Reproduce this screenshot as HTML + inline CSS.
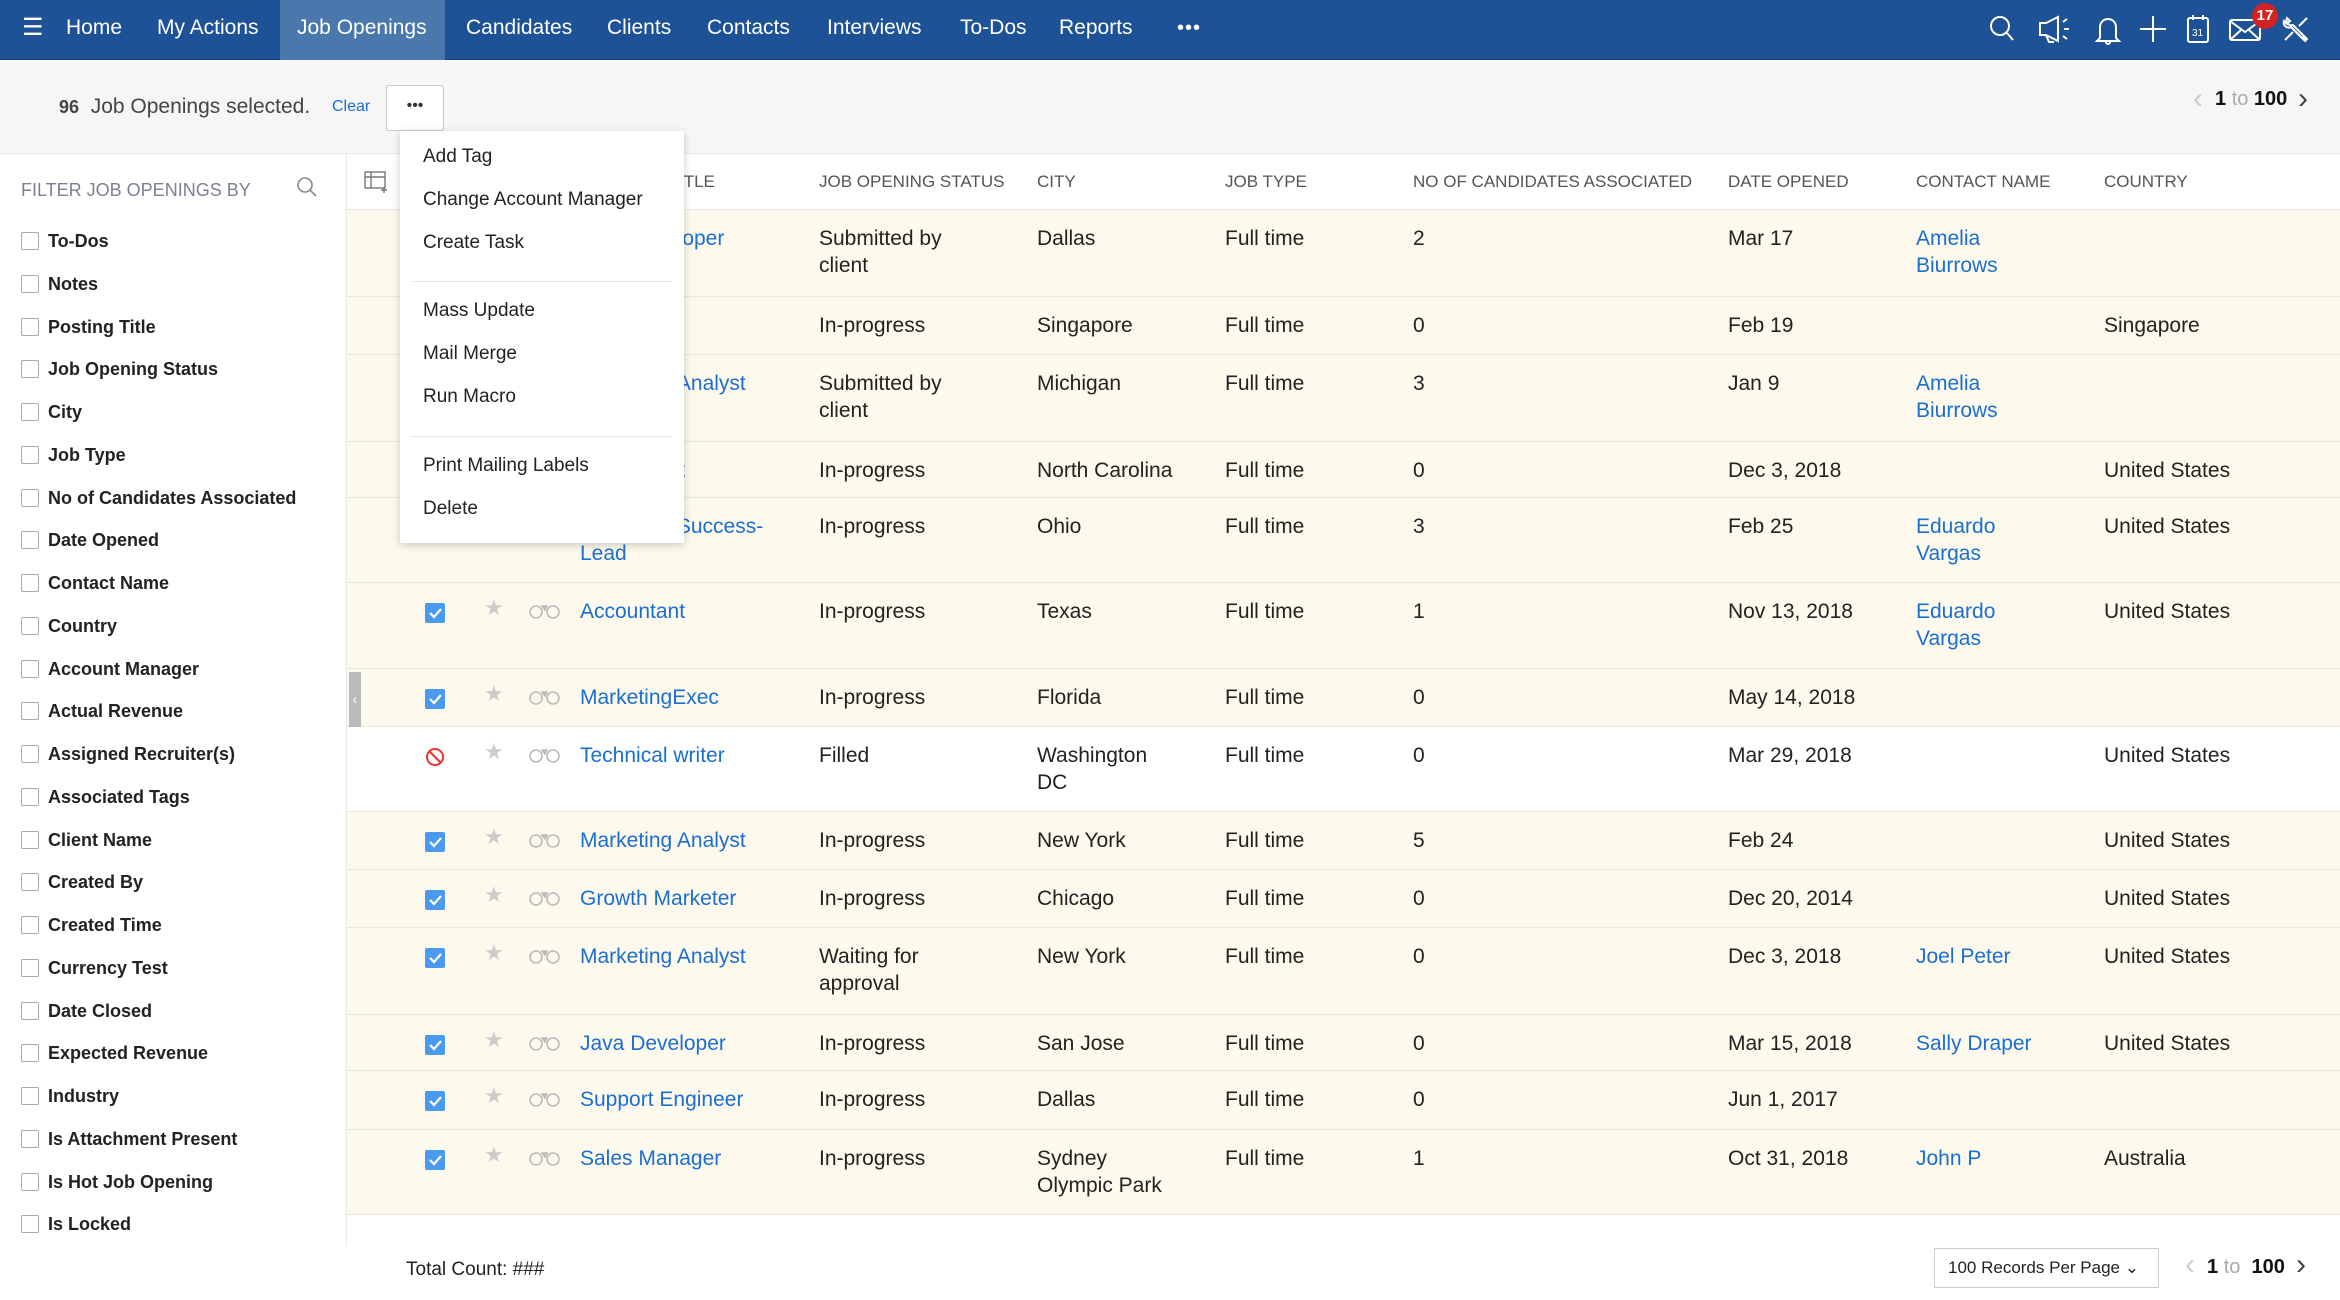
<!DOCTYPE html>
<html><head><meta charset="utf-8"><style>
*{margin:0;padding:0;box-sizing:border-box}
body{width:2340px;height:1300px;overflow:hidden;background:#fff;font-family:"Liberation Sans",sans-serif;color:#222;position:relative}
.abs{position:absolute;white-space:nowrap}
#nav{position:absolute;left:0;top:0;width:2340px;height:60px;background:#1e5296;border-bottom:1px solid #16427c}
#nav .it{position:absolute;top:0;height:60px;line-height:56px;color:#fff;font-size:21px}
#nav .act{background:#4a77ac}
#tool{position:absolute;left:0;top:60px;width:2340px;height:94px;background:#f6f6f6;border-bottom:1px solid #e6e6e6}
#side{position:absolute;left:0;top:154px;width:347px;height:1092px;border-right:1px solid #e8e8e8;background:#fff}
.si{position:absolute;left:21px;font-size:18px;font-weight:bold;color:#222;height:20px;line-height:20px}
.si i{display:inline-block;width:18px;height:18px;border:1.5px solid #aaa;border-radius:2px;vertical-align:-3px;margin-right:9px}
.hd{position:absolute;top:172px;font-size:17px;color:#555;white-space:nowrap}
.row{position:absolute;left:347px;width:1993px;background:#fdf9ec;border-bottom:1px solid #ebe7da}
.row span{position:absolute;top:15px;font-size:21px;line-height:27px;white-space:nowrap}
.l{color:#1a6fd0}
.cb{position:absolute;left:78px;top:20px;width:20px;height:20px;background:#4a9bf0;border-radius:2px}
.st{position:absolute;left:137px;top:12px;color:#ccc;font-size:22px}
.bi{position:absolute;left:181px;top:19px}
.menu{position:absolute;left:400px;top:131px;width:284px;height:412px;background:#fff;box-shadow:0 2px 8px rgba(0,0,0,.2);z-index:5}
.menu div{position:absolute;left:23px;font-size:19px;color:#222}
.menu hr{position:absolute;left:12px;width:260px;border:0;border-top:1px solid #e5e5e5}
</style></head><body>
<div id="nav">
<div class="it" style="left:22px;font-size:24px">&#9776;</div>
<div class="it" style="left:66px">Home</div>
<div class="it" style="left:157px">My Actions</div>
<div class="it act" style="left:280px;width:165px;padding-left:17px">Job Openings</div>
<div class="it" style="left:466px">Candidates</div>
<div class="it" style="left:607px">Clients</div>
<div class="it" style="left:707px">Contacts</div>
<div class="it" style="left:827px">Interviews</div>
<div class="it" style="left:960px">To-Dos</div>
<div class="it" style="left:1059px">Reports</div>
<div class="it" style="left:1177px;font-size:20px;letter-spacing:1px">&#8226;&#8226;&#8226;</div>
<svg class="abs" style="left:1985px;top:12px" width="350" height="36" fill="none" stroke="#fff" stroke-width="2">
<circle cx="15" cy="14" r="9"/><path d="M22 21l6 7"/>
<path d="M55 11h6l12-6v24l-12-6h-6z M61 23l3 7h5 M78 10l4-3 M79 17h5 M78 24l4 3"/>
<path d="M115 26V15a8 8 0 0116 0v11l3 3H112z M121 30a2 2 0 004 0"/>
<path d="M168 4v26 M155 17h26"/>
<rect x="203" y="6" width="20" height="24" rx="2"/><path d="M208 3v5 M218 3v5"/><text x="207" y="24" font-size="10" fill="#fff" stroke="none">31</text>
<rect x="245" y="8" width="30" height="20" rx="2"/><path d="M245 9l15 11 15-11 M245 28l11-10 M275 28l-11-10"/>
<path d="M302 6a5 5 0 006 7l14 14-2 2-14-14a5 5 0 01-7-6l3 3 3-3z M322 6l-8 8 M300 28l8-8 M318 24l4 4"/>
</svg>
<div class="abs" style="left:2252px;top:3px;width:26px;height:26px;border-radius:13px;background:#d32222;color:#fff;font-size:15px;font-weight:bold;text-align:center;line-height:26px">17</div>
</div>
<div id="tool">
<div class="abs" style="left:59px;top:35px;font-size:21px;color:#444"><b style="font-size:18px">96</b>&nbsp; Job Openings selected.</div>
<div class="abs" style="left:332px;top:38px;font-size:16px;color:#1a6fd0">Clear</div>
<div class="abs" style="left:386px;top:25px;width:58px;height:46px;background:#fff;border:1px solid #ccc;border-radius:2px;text-align:center;line-height:40px;font-size:16px;color:#333">&#8226;&#8226;&#8226;</div>
<div class="abs" style="left:2193px;top:22px;font-size:30px;color:#ccc">&#8249;</div>
<div class="abs" style="left:2215px;top:28px;font-size:20px;font-weight:bold;color:#111">1 <span style="color:#aaa;font-weight:normal">to</span> 100</div>
<div class="abs" style="left:2298px;top:22px;font-size:30px;color:#444">&#8250;</div>
</div>
<div id="side">
<div class="abs" style="left:21px;top:26px;font-size:18px;color:#7b8193">FILTER JOB OPENINGS BY</div>
<svg class="abs" style="left:296px;top:22px" width="22" height="22" fill="none" stroke="#888" stroke-width="1.6"><circle cx="9" cy="9" r="7"/><path d="M14 14l6 6"/></svg>
</div>
<div id="sitems"></div>
<div style="position:absolute;left:347px;top:154px;width:1993px;height:57px;border-bottom:2px solid #e8e8e8"></div>
<svg class="abs" style="left:364px;top:170px" width="26" height="24" fill="none" stroke="#777" stroke-width="1.4"><rect x="1" y="2" width="20" height="16"/><path d="M1 7h20 M7 2v16 M20 17v6 M17 20h6"/></svg>
<div class="hd" style="left:548px">JOB OPENING TITLE</div>
<div class="hd" style="left:819px">JOB OPENING STATUS</div>
<div class="hd" style="left:1037px">CITY</div>
<div class="hd" style="left:1225px">JOB TYPE</div>
<div class="hd" style="left:1413px">NO OF CANDIDATES ASSOCIATED</div>
<div class="hd" style="left:1728px">DATE OPENED</div>
<div class="hd" style="left:1916px">CONTACT NAME</div>
<div class="hd" style="left:2104px">COUNTRY</div>
<div id="rows"></div>
<div class="abs" style="left:349px;top:672px;width:12px;height:55px;background:#bbb;color:#fff;font-size:14px;text-align:center;line-height:55px">&#8249;</div>
<div class="menu">
<div style="top:15px">Add Tag</div>
<div style="top:58px">Change Account Manager</div>
<div style="top:101px">Create Task</div>
<hr style="top:150px">
<div style="top:169px">Mass Update</div>
<div style="top:212px">Mail Merge</div>
<div style="top:255px">Run Macro</div>
<hr style="top:305px">
<div style="top:324px">Print Mailing Labels</div>
<div style="top:367px">Delete</div>
</div>
<div class="abs" style="left:406px;top:1259px;font-size:19px;color:#222">Total Count: ###</div>
<div class="abs" style="left:1934px;top:1248px;width:225px;height:40px;border:1px solid #ccc;background:#fff;font-size:17px;line-height:38px;padding-left:13px;color:#222">100 Records Per Page &#8964;</div>
<div class="abs" style="left:2185px;top:1248px;font-size:30px;color:#ccc">&#8249;</div>
<div class="abs" style="left:2207px;top:1256px;font-size:20px;font-weight:bold;color:#111">1 <span style="color:#aaa;font-weight:normal">to</span> &nbsp;100</div>
<div class="abs" style="left:2296px;top:1248px;font-size:30px;color:#444">&#8250;</div>
<script>
var s=["To-Dos","Notes","Posting Title","Job Opening Status","City","Job Type","No of Candidates Associated","Date Opened","Contact Name","Country","Account Manager","Actual Revenue","Assigned Recruiter(s)","Associated Tags","Client Name","Created By","Created Time","Currency Test","Date Closed","Expected Revenue","Industry","Is Attachment Present","Is Hot Job Opening","Is Locked"];
var h="";s.forEach(function(t,i){h+='<div class="si" style="top:'+(231+i*42.75)+'px"><i></i>'+t+'</div>'});
document.getElementById("sitems").innerHTML=h;
var R=[[210,87,"Web Developer","Submitted by<br>client","Dallas","2","Mar 17","Amelia<br>Biurrows","",0],
[297,58,"Consultant","In-progress","Singapore","0","Feb 19","","Singapore",0],
[355,87,"Marketing Analyst","Submitted by<br>client","Michigan","3","Jan 9","Amelia<br>Biurrows","",0],
[442,56,"Accountant","In-progress","North Carolina","0","Dec 3, 2018","","United States",0],
[498,85,"Customer Success-<br>Lead","In-progress","Ohio","3","Feb 25","Eduardo<br>Vargas","United States",0],
[583,86,"Accountant","In-progress","Texas","1","Nov 13, 2018","Eduardo<br>Vargas","United States",1],
[669,58,"MarketingExec","In-progress","Florida","0","May 14, 2018","","",1],
[727,85,"Technical writer","Filled","Washington<br>DC","0","Mar 29, 2018","","United States",2],
[812,58,"Marketing Analyst","In-progress","New York","5","Feb 24","","United States",1],
[870,58,"Growth Marketer","In-progress","Chicago","0","Dec 20, 2014","","United States",1],
[928,87,"Marketing Analyst","Waiting for<br>approval","New York","0","Dec 3, 2018","Joel Peter","United States",1],
[1015,56,"Java Developer","In-progress","San Jose","0","Mar 15, 2018","Sally Draper","United States",1],
[1071,59,"Support Engineer","In-progress","Dallas","0","Jun 1, 2017","","",1],
[1130,85,"Sales Manager","In-progress","Sydney<br>Olympic Park","1","Oct 31, 2018","John P","Australia",1]];
var o="";R.forEach(function(r){
o+='<div class="row" style="top:'+r[0]+'px;height:'+r[1]+'px;'+(r[9]==2?'background:#fff':'')+'">';
if(r[9]==1)o+='<div class="cb"><svg width="20" height="20"><path d="M5 10l4 4 7-8" stroke="#fff" stroke-width="2.2" fill="none"/></svg></div>';
if(r[9]==2)o+='<svg style="position:absolute;left:78px;top:20px" width="20" height="20" fill="none" stroke="#e33" stroke-width="2"><circle cx="10" cy="10" r="8"/><path d="M4.5 4.5l11 11"/></svg>';
o+='<div class="st">&#9733;</div><svg class="bi" width="34" height="18" fill="none" stroke="#bbb" stroke-width="1.6"><circle cx="8" cy="10" r="6"/><circle cx="25" cy="10" r="6"/><path d="M14 4h5l-2 4z" fill="#bbb"/></svg>';
o+='<span class="l" style="left:233px">'+r[2]+'</span><span style="left:472px">'+r[3]+'</span><span style="left:690px">'+r[4]+'</span><span style="left:878px">Full time</span><span style="left:1066px">'+r[5]+'</span><span style="left:1381px">'+r[6]+'</span><span class="l" style="left:1569px">'+r[7]+'</span><span style="left:1757px">'+r[8]+'</span></div>';});
document.getElementById("rows").innerHTML=o;
</script>
</body></html>
